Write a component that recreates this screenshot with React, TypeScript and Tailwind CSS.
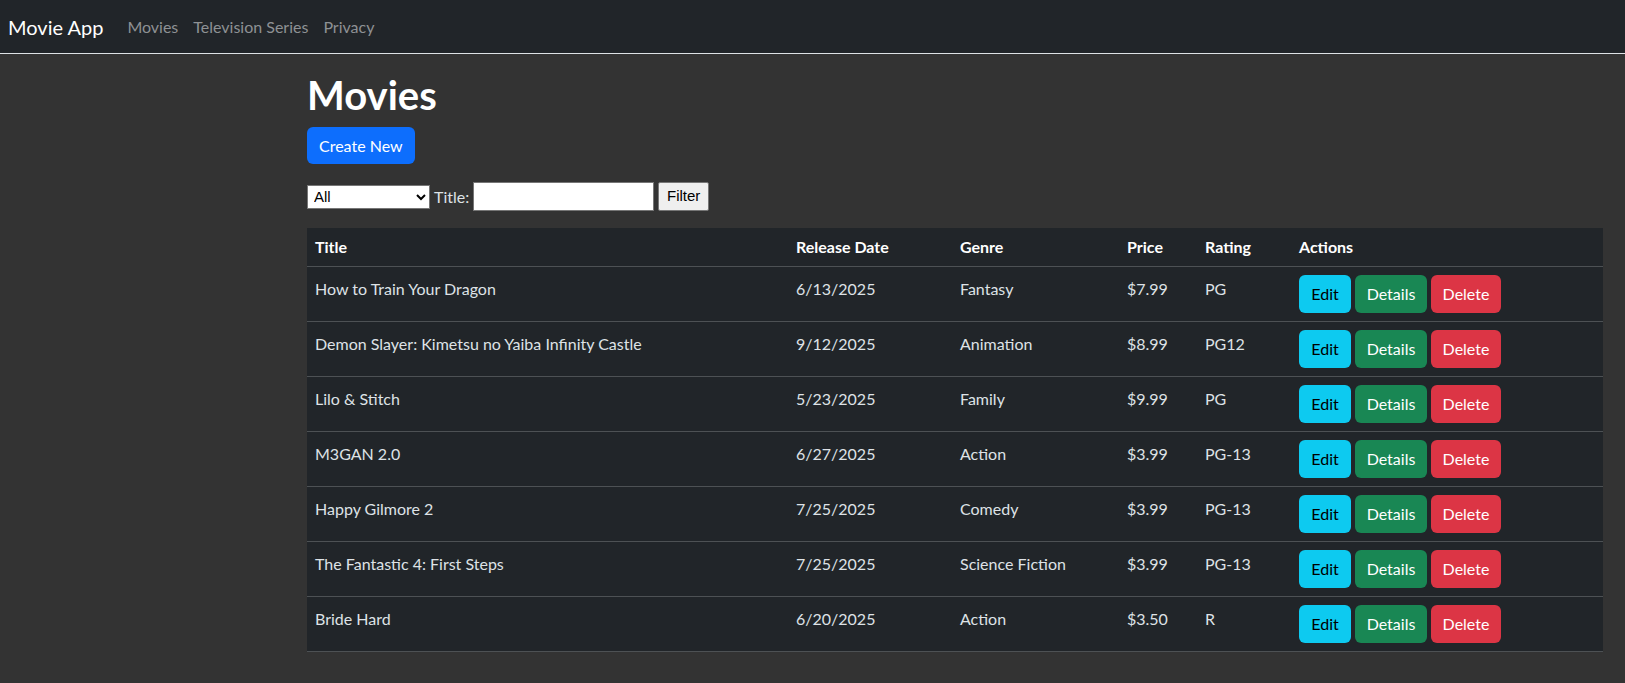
import React from "react";

type Movie = {
  title: string;
  date: string;
  genre: string;
  price: string;
  rating: string;
};

const movies: Movie[] = [
  { title: "How to Train Your Dragon", date: "6/13/2025", genre: "Fantasy", price: "$7.99", rating: "PG" },
  { title: "Demon Slayer: Kimetsu no Yaiba Infinity Castle", date: "9/12/2025", genre: "Animation", price: "$8.99", rating: "PG12" },
  { title: "Lilo & Stitch", date: "5/23/2025", genre: "Family", price: "$9.99", rating: "PG" },
  { title: "M3GAN 2.0", date: "6/27/2025", genre: "Action", price: "$3.99", rating: "PG-13" },
  { title: "Happy Gilmore 2", date: "7/25/2025", genre: "Comedy", price: "$3.99", rating: "PG-13" },
  { title: "The Fantastic 4: First Steps", date: "7/25/2025", genre: "Science Fiction", price: "$3.99", rating: "PG-13" },
  { title: "Bride Hard", date: "6/20/2025", genre: "Action", price: "$3.50", rating: "R" },
];

const App = () => {
  return (
    <div className="min-h-screen bg-[#333333] font-['Lato','Liberation_Sans',sans-serif] text-[#dee2e6]">
      <nav className="flex h-[54px] items-center border-b border-[#dee2e6] bg-[#212529] px-2">
        <a className="mr-[24px] text-[20px] text-white">Movie App</a>
        <ul className="flex gap-[15px] text-[16px] text-[#8e9194]">
          <li>Movies</li>
          <li>Television Series</li>
          <li>Privacy</li>
        </ul>
      </nav>

      <main className="pl-[307px] pr-[22px] pt-[17px]">
        <h1 className="mb-[8px] text-[40px] font-bold leading-[1.2] text-white">Movies</h1>
        <button className="mb-[18px] h-[37px] rounded-[6px] bg-[#0d6efd] px-[12px] text-[16px] text-white">
          Create New
        </button>

        <form className="mb-[17px] flex items-center gap-[4px] text-[16px]">
          <select className="h-[24px] w-[123px] border border-[#767676] bg-white px-[2px] font-['Liberation_Sans',sans-serif] text-[15px] text-black">
            <option>All</option>
          </select>
          <label className="text-[#dee2e6]">Title:</label>
          <input className="h-[29px] w-[181px] border border-[#767676] bg-white px-[2px] text-black" />
          <button className="h-[29px] w-[51px] rounded-[2px] border border-[#767676] bg-[#efefef] font-['Liberation_Sans',sans-serif] text-[15px] text-black">
            Filter
          </button>
        </form>

        <table className="w-full table-fixed border-collapse bg-[#212529] text-left text-[16px]">
          <colgroup>
            <col className="w-[481px]" />
            <col className="w-[164px]" />
            <col className="w-[167px]" />
            <col className="w-[78px]" />
            <col className="w-[94px]" />
            <col />
          </colgroup>
          <thead>
            <tr className="border-b border-[#4d5154]">
              {["Title", "Release Date", "Genre", "Price", "Rating", "Actions"].map((h) => (
                <th key={h} className="px-[8px] py-[8px] font-bold leading-[22px] text-white">
                  {h}
                </th>
              ))}
            </tr>
          </thead>
          <tbody>
            {movies.map((m) => (
              <tr key={m.title} className="border-b border-[#4d5154] align-top">
                <td className="px-[8px] pt-[10px]">{m.title}</td>
                <td className="px-[8px] pt-[10px]">{m.date}</td>
                <td className="px-[8px] pt-[10px]">{m.genre}</td>
                <td className="px-[8px] pt-[10px]">{m.price}</td>
                <td className="px-[8px] pt-[10px]">{m.rating}</td>
                <td className="px-[8px] py-[8px]">
                  <div className="flex gap-[4px]">
                    <button className="h-[38px] w-[52px] rounded-[6px] bg-[#0dcaf0] text-black">Edit</button>
                    <button className="h-[38px] w-[72px] rounded-[6px] bg-[#198754] text-white">Details</button>
                    <button className="h-[38px] w-[70px] rounded-[6px] bg-[#dc3545] text-white">Delete</button>
                  </div>
                </td>
              </tr>
            ))}
          </tbody>
        </table>
      </main>
    </div>
  );
};

export default App;
